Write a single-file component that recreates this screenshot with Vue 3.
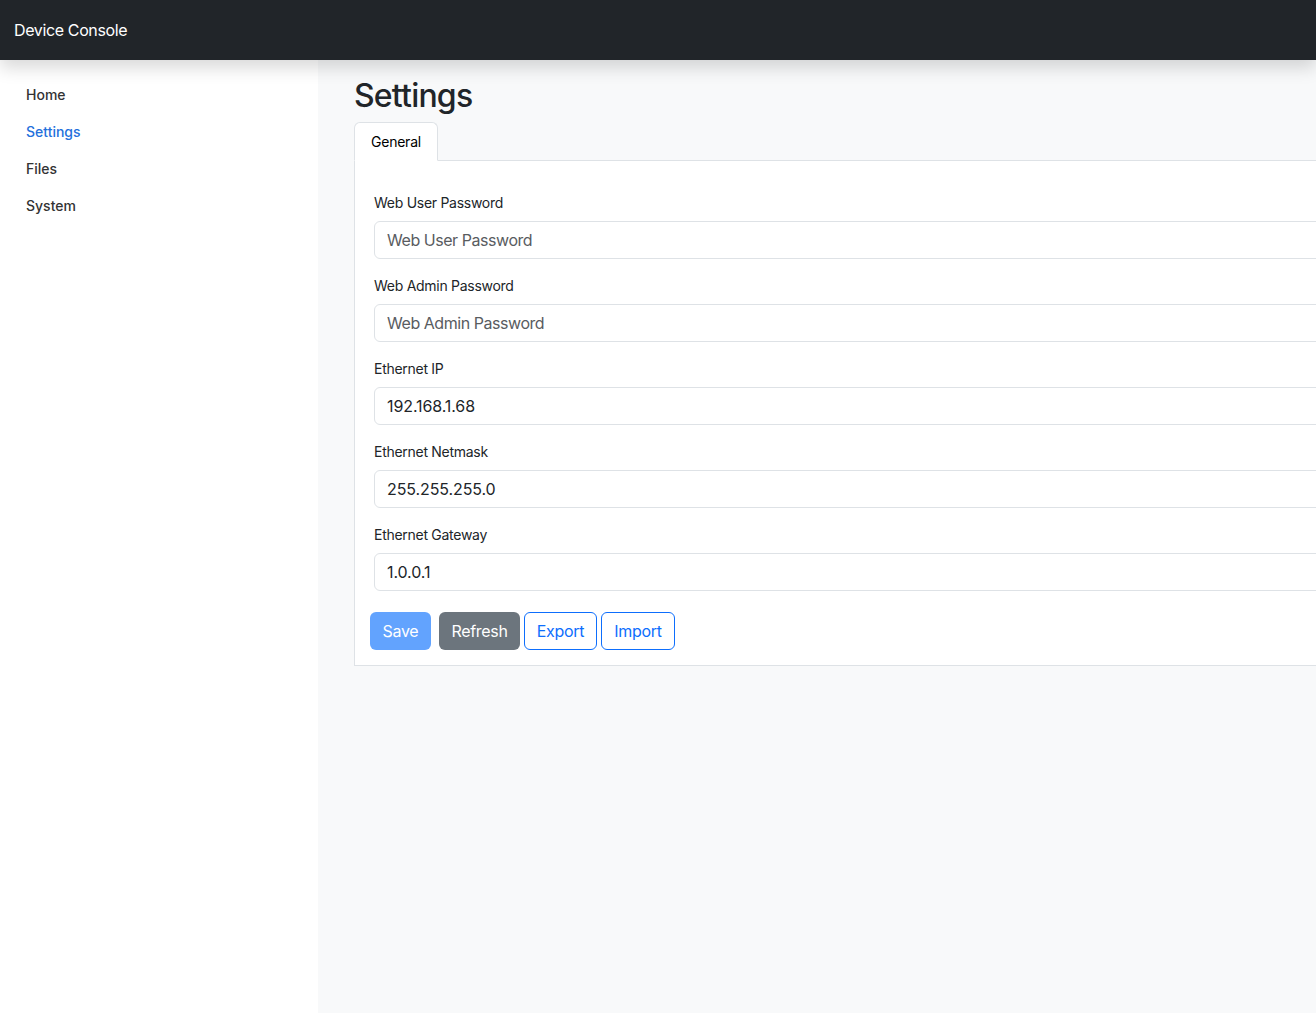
<template>
  <div class="page">
    <header class="navbar">
      <a class="brand" href="#">Device Console</a>
    </header>
    <div class="body-row">
      <nav class="sidebar">
        <a v-for="item in navItems" :key="item" href="#" class="nav-link" :class="{ active: item === 'Settings' }">{{ item }}</a>
      </nav>
      <main class="main">
        <h1 class="title">Settings</h1>
        <div class="tabs">
          <button class="tab">General</button>
        </div>
        <div class="tab-pane">
          <div v-for="field in fields" :key="field.label" class="field">
            <label class="field-label">{{ field.label }}</label>
            <input class="field-input" type="text" :placeholder="field.placeholder" :value="field.value" />
          </div>
          <div class="actions">
            <button class="btn btn-save">Save</button>
            <button class="btn btn-refresh">Refresh</button>
            <button class="btn btn-outline btn-export">Export</button>
            <button class="btn btn-outline btn-import">Import</button>
          </div>
        </div>
      </main>
    </div>
  </div>
</template>

<script setup>
const navItems = ['Home', 'Settings', 'Files', 'System']

const fields = [
  { label: 'Web User Password', placeholder: 'Web User Password', value: '' },
  { label: 'Web Admin Password', placeholder: 'Web Admin Password', value: '' },
  { label: 'Ethernet IP', placeholder: '', value: '192.168.1.68' },
  { label: 'Ethernet Netmask', placeholder: '', value: '255.255.255.0' },
  { label: 'Ethernet Gateway', placeholder: '', value: '1.0.0.1' },
]
</script>

<style>
html,
body {
  margin: 0;
  overflow: hidden;
}
</style>

<style scoped>
* {
  box-sizing: border-box;
}

.page {
  height: 1013px;
  display: flex;
  flex-direction: column;
  font-family: Inter, "Liberation Sans", sans-serif;
  color: #212529;
  overflow: hidden;
}

.navbar {
  height: 60px;
  flex: none;
  display: flex;
  align-items: center;
  padding-left: 14px;
  background-color: #212529;
  box-shadow: 0 8px 16px rgba(0, 0, 0, 0.15);
  position: relative;
  z-index: 2;
}

.brand {
  color: #ffffff;
  font-size: 16px;
  font-weight: 400;
  letter-spacing: -0.37px;
  text-decoration: none;
}

.body-row {
  flex: 1;
  display: flex;
}

.sidebar {
  width: 318px;
  flex: none;
  padding-top: 16px;
  display: flex;
  flex-direction: column;
  background-color: #ffffff;
}

.nav-link {
  height: 37px;
  padding-left: 26px;
  display: flex;
  align-items: center;
  font-size: 14px;
  font-weight: 500;
  color: #333333;
  text-decoration: none;
}

.nav-link.active {
  color: #2470dc;
}

.main {
  flex: 1;
  min-width: 0;
  padding-left: 36px;
  background-color: #f8f9fa;
}

.title {
  margin: 16px 0 7px;
  height: 39px;
  font-size: 32px;
  line-height: 39px;
  font-weight: 500;
  letter-spacing: -0.8px;
}

.tabs {
  width: 1400px;
  height: 39px;
  display: flex;
  border-bottom: 1px solid #dee2e6;
}

.tab {
  height: 39px;
  width: 84px;
  padding: 0;
  font-family: inherit;
  font-size: 14px;
  letter-spacing: -0.25px;
  color: #000000;
  background-color: #ffffff;
  border: 1px solid #dee2e6;
  border-bottom-color: #ffffff;
  border-radius: 6px 6px 0 0;
}

.tab-pane {
  width: 1400px;
  height: 505px;
  padding: 31px 15px 0;
  background-color: #ffffff;
  border: 1px solid #dee2e6;
  border-top: none;
}

.field {
  padding-left: 4px;
  margin-bottom: 16px;
}

.field-label {
  display: block;
  height: 21px;
  margin-bottom: 8px;
  font-size: 14px;
  line-height: 21px;
  letter-spacing: -0.28px;
  color: #212529;
}

.field-input {
  display: block;
  width: 100%;
  height: 38px;
  padding: 6px 12px;
  font-family: inherit;
  font-size: 16px;
  letter-spacing: -0.1px;
  color: #212529;
  background-color: #ffffff;
  border: 1px solid #dee2e6;
  border-radius: 6px;
  outline: none;
}

.field-input::placeholder {
  color: #595c5f;
  letter-spacing: -0.45px;
}

.actions {
  display: flex;
  margin-top: 21px;
}

.btn {
  height: 38px;
  padding: 0;
  font-family: inherit;
  font-size: 16px;
  letter-spacing: -0.3px;
  border: 1px solid transparent;
  border-radius: 6px;
}

.btn-save {
  width: 61px;
  color: #ffffff;
  background-color: #62a3fe;
  margin-right: 8px;
}

.btn-refresh {
  width: 81px;
  color: #ffffff;
  background-color: #6c757d;
  margin-right: 4px;
}

.btn-outline {
  color: #0d6efd;
  background-color: transparent;
  border-color: #0d6efd;
  margin-right: 4px;
}

.btn-export {
  width: 73px;
}

.btn-import {
  width: 74px;
}
</style>
